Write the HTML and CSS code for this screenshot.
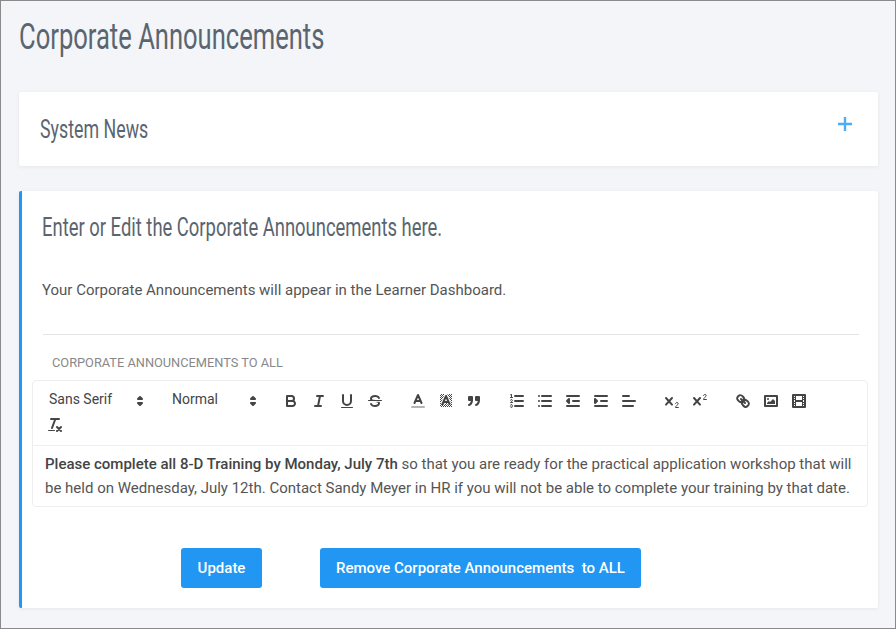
FILE: index.html
```html
<!DOCTYPE html>
<html>
<head>
<meta charset="utf-8">
<title>Corporate Announcements</title>
	<link rel="stylesheet" href="styles.css">
</head>
<body>
	<div class="page">
		<h1 class="page-title">Corporate Announcements</h1>

		<section class="card news">
			<h2 class="news-title">System News</h2>
			<svg class="plus" viewBox="0 0 16 16"><path d="M8 1v14M1 8h14"/></svg>
		</section>

		<section class="card editor-card">
			<h3 class="editor-title">Enter or Edit the Corporate Announcements here.</h3>
			<p class="intro">Your Corporate Announcements will appear in the Learner Dashboard.</p>
			<hr class="divider">
			<label class="field-label">Corporate Announcements to ALL</label>

			<div class="editor">
				<div class="toolbar">
					<span class="formats">
						<span class="picker font">Sans Serif<svg viewBox="0 0 18 18"><polygon class="st" points="7 11 9 13 11 11 7 11"/><polygon class="st" points="7 7 9 5 11 7 7 7"/></svg></span>
						<span class="picker size">Normal<svg viewBox="0 0 18 18"><polygon class="st" points="7 11 9 13 11 11 7 11"/><polygon class="st" points="7 7 9 5 11 7 7 7"/></svg></span>
					</span>
					<span class="formats">
						<button class="tool"><svg viewBox="0 0 18 18"><path class="st" d="M5,4H9.5A2.5,2.5,0,0,1,12,6.5v0A2.5,2.5,0,0,1,9.5,9H5V4Z"/><path class="st" d="M5,9h5.5A2.5,2.5,0,0,1,13,11.5v0A2.5,2.5,0,0,1,10.5,14H5V9Z"/></svg></button>
						<button class="tool"><svg viewBox="0 0 18 18"><path class="st" d="M7 4h6M5 14h6M8 14l2-10"/></svg></button>
						<button class="tool"><svg viewBox="0 0 18 18"><path class="st" d="M5,3V9a4.012,4.012,0,0,0,4,4H9a4.012,4.012,0,0,0,4-4V3"/><rect class="fl" height="1" rx="0.5" ry="0.5" width="12" x="3" y="15"/></svg></button>
						<button class="tool"><svg viewBox="0 0 18 18"><path class="st thin" d="M15.5 8.5h-13"/><path class="fl" d="M9.007,8C6.542,7.791,6,7.519,6,6.5,6,5.792,7.283,5,9,5c1.571,0,2.765.679,2.969,1.309a1,1,0,0,0,1.9-.617C13.356,4.106,11.354,3,9,3,6.2,3,4,4.538,4,6.5a3.2,3.2,0,0,0,.5,1.843Z"/><path class="fl" d="M8.984,10C11.457,10.208,12,10.479,12,11.5c0,.708-1.283,1.5-3,1.5-1.571,0-2.765-.679-2.969-1.309a1,1,0,1,0-1.9.617C4.644,13.894,6.646,15,9,15c2.8,0,5-1.538,5-3.5a3.2,3.2,0,0,0-.5-1.843Z"/></svg></button>
					</span>
					<span class="formats">
						<button class="tool"><svg viewBox="0 0 18 18"><path class="st faint" d="M3 15h12"/><path class="st" d="M5.5 11L9 3l3.5 8M11.63 9H6.38"/></svg></button>
						<button class="tool"><svg viewBox="0 0 18 18"><defs><pattern id="dither" width="2" height="2" patternUnits="userSpaceOnUse"><rect class="fl" width="1" height="1"/><rect class="fl" x="1" y="1" width="1" height="1"/></pattern></defs><rect fill="url(#dither)" x="3" y="2" width="12" height="13"/><path class="halo" d="M5.5 12L9 4l3.5 8"/><path class="st" d="M5.5 12L9 4l3.5 8M11.63 10H6.38"/></svg></button>
						<button class="tool"><svg viewBox="0 0 18 18"><rect class="st fl" height="3" width="3" x="4" y="5"/><rect class="st fl" height="3" width="3" x="11" y="5"/><path class="st fl" d="M7,8c0,4.031-3,5-3,5"/><path class="st fl" d="M14,8c0,4.031-3,5-3,5"/></svg></button>
					</span>
					<span class="formats">
						<button class="tool"><svg viewBox="0 0 18 18"><path class="st" d="M7 4h8M7 9h8M7 14h8"/><path class="st thin" d="M2.5 5.5h2"/><path class="fl" d="M3.5,6A0.5,0.5,0,0,1,3,5.5V3.085l-0.276.138A0.5,0.5,0,0,1,2.053,3c-0.124-.247-0.023-0.324.224-0.447l1-.5A0.5,0.5,0,0,1,4,2.5v3A0.5,0.5,0,0,1,3.5,6Z"/><path class="st thin" d="M4.5,10.5h-2c0-.234,1.85-1.076,1.85-2.234A0.959,0.959,0,0,0,2.5,8.156"/><path class="st thin" d="M2.5,14.846a0.959,0.959,0,0,0,1.85-.109A0.7,0.7,0,0,0,3.75,14a0.688,0.688,0,0,0,.6-0.736,0.959,0.959,0,0,0-1.85-.109"/></svg></button>
						<button class="tool"><svg viewBox="0 0 18 18"><path class="st" d="M6 4h9M6 9h9M6 14h9M3 4h0M3 9h0M3 14h0"/></svg></button>
						<button class="tool"><svg viewBox="0 0 18 18"><path class="st" d="M3 14h12M3 4h12M9 9h6"/><polygon class="st fl" points="5 7 5 11 3 9 5 7"/></svg></button>
						<button class="tool"><svg viewBox="0 0 18 18"><path class="st" d="M3 14h12M3 4h12M9 9h6"/><polygon class="st fl" points="3 7 3 11 5 9 3 7"/></svg></button>
						<button class="tool"><svg viewBox="0 0 18 18"><path class="st" d="M3 9h12M3 14h10M3 4h6"/></svg></button>
					</span>
					<span class="formats">
						<button class="tool"><svg viewBox="0 0 18 18"><path class="st" d="M3 6l6 6.6M9 6l-6 6.6"/><path class="st thin" d="M12.5 11.6c.2-.8.9-1.1 1.5-1.1.7 0 1.2.5 1.2 1.1 0 1.2-2.7 2.2-2.7 3.9h2.9"/></svg></button>
						<button class="tool"><svg viewBox="0 0 18 18"><path class="st" d="M3 6l6 6.6M9 6l-6 6.6"/><path class="st thin" d="M12.5 3.6c.2-.8.9-1.1 1.5-1.1.7 0 1.2.5 1.2 1.1 0 1.2-2.7 2.2-2.7 3.9h2.9"/></svg></button>
					</span>
					<span class="formats">
						<button class="tool"><svg viewBox="0 0 18 18"><path class="st" d="M7 7l4 4"/><path class="st" d="M8.9,4.577a3.476,3.476,0,0,1,.36,4.679A3.476,3.476,0,0,1,4.577,8.9C3.185,7.5,2.035,6.4,4.217,4.217S7.5,3.185,8.9,4.577Z"/><path class="st" d="M13.423,9.1a3.476,3.476,0,0,0-4.679-.36,3.476,3.476,0,0,0,.36,4.679c1.392,1.392,2.5,2.542,4.679.36S14.815,10.5,13.423,9.1Z"/></svg></button>
						<button class="tool"><svg viewBox="0 0 18 18"><rect class="st" height="10" width="12" x="3" y="4"/><circle class="fl" cx="6" cy="7" r="1"/><polygon class="fl" points="5 12 5 11 7 9 8 10 11 7 13 9 13 12 5 12"/></svg></button>
						<button class="tool"><svg viewBox="0 0 18 18"><rect class="st" height="12" width="12" x="3" y="3"/><path class="fl" d="M5 3h1v12H5zM12 3h1v12h-1zM5 8h8v2H5zM3 5h3v1H3zM3 7h3v1H3zM3 10h3v1H3zM3 12h3v1H3zM12 5h3v1h-3zM12 7h3v1h-3zM12 10h3v1h-3zM12 12h3v1h-3z"/></svg></button>
					</span>
					<span class="formats">
						<button class="tool"><svg viewBox="0 0 18 18"><path class="st" d="M5 3h8M6 12L9.35 3M11 11l4 4M15 11l-4 4"/><rect class="fl" height="1" rx="0.5" ry="0.5" width="7" x="2" y="14"/></svg></button>
					</span>
				</div>
				<div class="editor-body"><strong>Please complete all 8-D Training by Monday, July 7th</strong> so that you are ready for the practical application workshop that will be held on Wednesday, July 12th. Contact Sandy Meyer in HR if you will not be able to complete your training by that date.</div>
			</div>

			<div class="actions">
				<button class="btn btn-update">Update</button>
				<button class="btn btn-remove">Remove Corporate Announcements&nbsp; to ALL</button>
			</div>
		</section>
	</div>
</body>
</html>
```
FILE: styles.css
```css
body {
	font-family: Roboto, sans-serif;
	font-size: 15px;
	margin: 0;
	padding: 0;
	color: #555;
}
.page {
	box-sizing: border-box;
	width: 896px;
	height: 629px;
	border: 1px solid #8a8a8a;
	background: #f4f5f8;
	padding: 16px 17px 0 18px;
	overflow: hidden;
}
/* no Oswald here, so squeeze Roboto to its width */
.page-title, .news-title, .editor-title {
	font-family: Roboto, sans-serif;
	font-weight: 400;
	color: #5a6570;
	margin: 0;
	white-space: nowrap;
	transform-origin: left center;
}
.page-title {
	font-size: 36px;
	line-height: 40px;
	margin-bottom: 35px;
	transform: scaleX(0.71);
}
.card {
	background: #fff;
	border-radius: 2px;
	box-shadow: 0 1px 4px rgba(0, 0, 0, 0.06);
}
.news {
	height: 74px;
	display: flex;
	align-items: center;
	justify-content: space-between;
	padding: 0 25px 0 21px;
	box-sizing: border-box;
	margin-bottom: 25px;
}
.news-title {
	font-size: 26px;
	transform: scaleX(0.685);
}
.plus {
	width: 16px;
	height: 16px;
	margin-bottom: 11px;
}
.plus path {
	stroke: #4dacf5;
	stroke-width: 2.4;
	fill: none;
}
.editor-card {
	height: 417px;
	box-sizing: border-box;
	border-left: 3px solid #2196f3;
	padding: 22px 10px 0;
}
.editor-title {
	font-size: 25px;
	line-height: 30px;
	margin-left: 10px;
	transform: scaleX(0.737);
}
.intro {
	margin: 37px 0 0 10px;
	line-height: 20px;
}
.divider {
	border: 0;
	border-top: 1px solid #e3e3e3;
	margin: 34px 0 0 11px;
	width: 816px;
}
.field-label {
	display: block;
	font-size: 12.8px;
	line-height: 16px;
	text-transform: uppercase;
	color: #888;
	margin: 20px 0 9px 20px;
}
.editor {
	width: 836px;
	box-sizing: border-box;
	border: 1px solid #eee;
	border-radius: 4px;
}
.toolbar {
	display: flex;
	flex-wrap: wrap;
	padding: 8px 7px 8px 8px;
	border-bottom: 1px solid #eee;
}
.formats {
	display: flex;
	margin-right: 15px;
}
.picker {
	position: relative;
	box-sizing: border-box;
	height: 24px;
	font-size: 14px;
	line-height: 20px;
	padding-left: 8px;
	color: #444;
}
.picker svg {
	position: absolute;
	right: 0;
	top: 50%;
	width: 18px;
	height: 18px;
	margin-top: -9px;
}
.font {
	width: 108px;
	margin-right: 15px;
}
.size {
	width: 98px;
}
.tool {
	width: 28px;
	height: 24px;
	padding: 3px 5px;
	border: 0;
	background: none;
}
.tool svg {
	display: block;
	width: 18px;
	height: 18px;
}
.st {
	fill: none;
	stroke: #444;
	stroke-width: 2;
	stroke-linecap: round;
	stroke-linejoin: round;
}
.thin {
	stroke-width: 1;
}
.faint {
	opacity: 0.4;
}
.fl {
	fill: #444;
}
.halo {
	fill: none;
	stroke: #fff;
	stroke-width: 4;
}
.editor-body {
	padding: 6px 12px 0;
	height: 60px;
	box-sizing: border-box;
	line-height: 24px;
}
.editor-body strong {
	font-weight: 500;
	color: #444;
}
.actions {
	display: flex;
	gap: 58px;
	margin: 41px 0 0 149px;
}
.btn {
	height: 40px;
	background: #2196f3;
	border: 0;
	border-radius: 3px;
	color: #fff;
	font-family: Roboto, sans-serif;
	font-size: 15px;
	font-weight: 500;
	padding: 0 16px;
}
.btn-update {
	width: 81px;
}
```
